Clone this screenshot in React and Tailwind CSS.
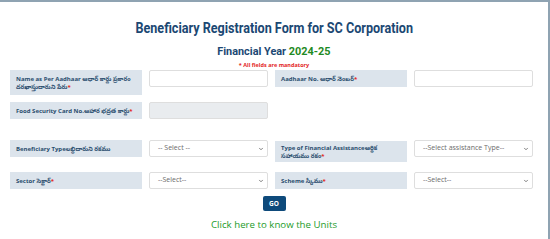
import React from 'react';
import { ChevronDown } from 'lucide-react';

const te = { fontFamily: '"Open Sans", "Noto Sans Telugu", "Noto Sans", sans-serif' };

function Label({ children, required, className = 'py-[4.5px] leading-[8px]' }) {
  return (
    <div
      className={`w-[132px] shrink-0 bg-[#dce4ec] px-[6px] text-[6px] font-bold text-[#2a4d6e] ${className}`}
      style={te}
    >
      {children}
      {required && <span className="text-[#e3261f]">*</span>}
    </div>
  );
}

function TextInput({ disabled }) {
  return (
    <div
      className={`h-[17px] w-[119px] shrink-0 rounded-[2px] border border-[#dedede] ${
        disabled ? 'bg-[#e9ecef]' : 'bg-white'
      }`}
    />
  );
}

function Select({ placeholder }) {
  return (
    <div className="flex h-[17px] w-[119px] shrink-0 items-center justify-between rounded-[2px] border border-[#dedede] bg-white pl-[8px] pr-[3px]">
      <span className="text-[7px] text-[#6b6b6b]" style={te}>
        {placeholder}
      </span>
      <ChevronDown className="h-[6px] w-[6px] text-[#555]" strokeWidth={3} />
    </div>
  );
}

export default function App() {
  return (
    <div className="h-[239px] w-[550px] overflow-hidden bg-white">
      <div className="h-full w-[550px] border-r-2 border-t-2 border-[#8fa3b2]">
        {/* Header */}
        <div className="flex flex-col items-center" style={{ fontFamily: 'Roboto, sans-serif' }}>
          <h1 className="mt-[17px] inline-block scale-x-[0.9] whitespace-nowrap text-[14px] font-bold leading-[18px] text-[#1b4873]">
            Beneficiary Registration Form for SC Corporation
          </h1>
          <h2 className="mt-[6.5px] inline-block scale-x-[0.93] whitespace-nowrap text-[11.7px] font-bold leading-[14px] text-[#1b4873]">
            Financial Year <span className="text-[#1f8a24]">2024-25</span>
          </h2>
          <p className="mt-[3.5px] text-[5.5px] font-bold leading-[8px] text-[#e3261f]" style={te}>
            * All fields are mandatory
          </p>
        </div>

        {/* Form */}
        <div className="mt-[1px] flex flex-col pl-[10px]">
          <div className="flex items-start gap-[7px]">
            <Label required>Name as Per Aadhaar ఆధార్ కార్డు ప్రకారం దరఖాస్తుదారుని పేరు</Label>
            <TextInput />
            <Label required>Aadhaar No. ఆధార్ నెంబర్</Label>
            <TextInput />
          </div>
          <div className="mt-[7px] flex items-start gap-[7px]">
            <Label required>Food Security Card No.ఆహార భద్రత కార్డు</Label>
            <TextInput disabled />
          </div>
          <div className="mt-[21px] flex items-start gap-[7px]">
            <Label>Beneficiary Typeలబ్ధిదారుని రకము</Label>
            <Select placeholder="-- Select --" />
            <Label required className="mt-[1px] py-[2.5px] leading-[8px]">
              Type of Financial Assistanceఆర్థిక సహాయము రకం
            </Label>
            <Select placeholder="--Select assistance Type--" />
          </div>
          <div className="mt-[10px] flex items-start gap-[7px]">
            <Label required>Sector సెక్టార్</Label>
            <Select placeholder="--Select--" />
            <Label required>Scheme స్కీము</Label>
            <Select placeholder="--Select--" />
          </div>
        </div>

        {/* Actions */}
        <div className="mt-[7px] flex flex-col items-center" style={te}>
          <button className="h-[15px] w-[23px] rounded-[2px] bg-[#0e4a7b] text-[6.5px] font-bold text-white">
            GO
          </button>
          <a className="mt-[8px] text-[9.7px] leading-[12px] text-[#239b2a]">Click here to know the Units</a>
        </div>
      </div>
    </div>
  );
}
